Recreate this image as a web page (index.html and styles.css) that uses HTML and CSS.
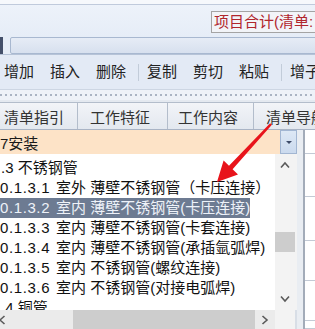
FILE: index.html
```html
<!DOCTYPE html>
<html lang="zh-CN">
<head>
<meta charset="utf-8">
<link rel="stylesheet" href="styles.css">
</head>
<body>
<div class="screen">
  <div class="top-strip"></div>
  <div class="top">
    <div class="total-box">项目合计(清单:</div>
  </div>
  <div class="inputbar">
    <div class="inputbar-mark"></div>
    <div class="inputbar-field"></div>
  </div>
  <div class="toolbar">
    <span class="tb-btn">增加</span>
    <span class="tb-btn">插入</span>
    <span class="tb-btn">删除</span>
    <span class="tb-sep"></span>
    <span class="tb-btn">复制</span>
    <span class="tb-btn">剪切</span>
    <span class="tb-btn">粘贴</span>
    <span class="tb-sep"></span>
    <span class="tb-btn">增子</span>
  </div>
  <div class="grip"><div class="grip-dots"></div></div>
  <div class="tabs">
    <div class="tab tab-1">清单指引</div>
    <div class="tab tab-2">工作特征</div>
    <div class="tab tab-3">工作内容</div>
    <div class="tab tab-4">清单导航</div>
  </div>
  <div class="main">
    <div class="left">
      <div class="combo">
        <div class="combo-text">7安装</div>
        <div class="combo-btn"><span class="combo-tri"></span></div>
      </div>
      <div class="listwrap">
        <div class="list">
          <div class="row"><span class="lead">.3</span> 不锈钢管</div>
          <div class="row"><span class="code">0.1.3.1</span>室外 薄壁不锈钢管（卡压连接）</div>
          <div class="row"><span class="sel"><span class="code">0.1.3.2</span>室内 薄壁不锈钢管(卡压连接)</span></div>
          <div class="row"><span class="code">0.1.3.3</span>室内 薄壁不锈钢管(卡套连接)</div>
          <div class="row"><span class="code">0.1.3.4</span>室内 薄壁不锈钢管(承插氩弧焊)</div>
          <div class="row"><span class="code">0.1.3.5</span>室内 不锈钢管(螺纹连接)</div>
          <div class="row"><span class="code">0.1.3.6</span>室内 不锈钢管(对接电弧焊)</div>
          <div class="row"><span class="lead">.4</span> 铜管</div>
        </div>
        <div class="vscroll">
          <div class="vs-arrow"><svg width="10" height="8" viewBox="0 0 10 8"><polyline points="1,6.5 5,2 9,6.5" fill="none" stroke="#5a5a5a" stroke-width="1.6"/></svg></div>
          <div class="vs-track"><div class="vs-thumb"></div></div>
          <div class="vs-arrow"><svg width="10" height="8" viewBox="0 0 10 8"><polyline points="1,1.5 5,6 9,1.5" fill="none" stroke="#5a5a5a" stroke-width="1.6"/></svg></div>
        </div>
      </div>
      <div class="hscrollrow">
        <div class="hscroll">
          <div class="hs-arrow hs-left"><svg width="8" height="10" viewBox="0 0 8 10"><polyline points="6.5,1 2,5 6.5,9" fill="none" stroke="#5a5a5a" stroke-width="1.6"/></svg></div>
          <div class="hs-track"><div class="hs-thumb"></div></div>
          <div class="hs-arrow"><svg width="8" height="10" viewBox="0 0 8 10"><polyline points="1.5,1 6,5 1.5,9" fill="none" stroke="#5a5a5a" stroke-width="1.6"/></svg></div>
        </div>
        <div class="corner"></div>
      </div>
    </div>
    <div class="gutter"></div>
    <div class="rpanel">
      <div class="rcell"></div>
      <div class="rcell"></div>
      <div class="rcell"></div>
      <div class="rcell"></div>
      <div class="rcell"></div>
      <div class="rcell"></div>
    </div>
  </div>
  <svg class="arrow" width="315" height="329" viewBox="0 0 315 329">
    <polygon points="270.1,123.2 271.9,124.8 232.6,169.2 238.0,174.4 217,182 223.6,160.6 229.0,165.8" fill="#e8141b"/>
  </svg>
</div>
</body>
</html>
```

FILE: styles.css
```css
html, body {
  margin: 0;
  padding: 0;
}
body {
  width: 315px;
  height: 329px;
  overflow: hidden;
  font-family: "Liberation Sans", "Noto Sans CJK SC", sans-serif;
  font-size: 15px;
  color: #1a1a1a;
  background: #e6edf7;
}
.screen {
  position: relative;
  width: 315px;
  height: 329px;
  overflow: hidden;
  display: flex;
  flex-direction: column;
}
.top-strip {
  height: 4px;
  background: #f6f8fc;
}
.top {
  height: 32px;
  box-sizing: border-box;
  border-top: 1px solid #c0cadc;
  background: linear-gradient(#edf2fa, #e6edf7);
  display: flex;
  justify-content: flex-end;
  padding-top: 6px;
}
.total-box {
  width: 104px;
  height: 22px;
  box-sizing: border-box;
  border: 1px solid #a4a4a4;
  border-right: none;
  background: #f2f4f8;
  color: #b0262d;
  line-height: 20px;
  padding-left: 2px;
  white-space: nowrap;
  overflow: hidden;
}
.inputbar {
  height: 19px;
  display: flex;
  padding-top: 1px;
  box-sizing: border-box;
  background: #e6edf7;
  border-bottom: 1px solid #b6c3d7;
}
.inputbar-mark {
  width: 3px;
  height: 17px;
  background: #44506a;
}
.inputbar-field {
  flex: 1;
  margin-left: 7px;
  margin-right: -6px;
  height: 17px;
  box-sizing: border-box;
  border: 1px solid #a8b8d0;
  border-radius: 2px;
  background: linear-gradient(#e6ecf6, #d7e0ee);
}
.toolbar {
  height: 34px;
  display: flex;
  align-items: center;
  padding-left: 4px;
  background: #e3eaf5;
  color: #222;
  white-space: nowrap;
  overflow: hidden;
}
.tb-btn {
  flex: none;
  margin-right: 16px;
  line-height: 20px;
}
.tb-sep {
  flex: none;
  width: 1px;
  height: 17px;
  background: #c2ccd9;
  margin: 0 8px 0 -4px;
}
.grip {
  height: 11px;
  box-sizing: border-box;
  border-top: 1px solid #cdd6e3;
  background: #eef2f8;
  display: flex;
  align-items: center;
}
.grip-dots {
  flex: 1;
  height: 2px;
  background: repeating-linear-gradient(90deg, #aab4c3 0 2px, transparent 2px 5px);
}
.tabs {
  height: 30px;
  box-sizing: border-box;
  padding-top: 2px;
  display: flex;
  background: #e4e9f0;
  border-bottom: 1px solid #a9b4c5;
  white-space: nowrap;
}
.tab {
  flex: none;
  height: 27px;
  box-sizing: border-box;
  border: 1px solid #b3bdcb;
  border-bottom: none;
  background: linear-gradient(#f2f4f8, #e3e8ef);
  color: #333;
  line-height: 24px;
  padding-top: 3px;
  margin-right: -1px;
}
.tab-1 { width: 88px; margin-left: -10px; padding-left: 13px; }
.tab-2 { width: 91px; padding-left: 12px; }
.tab-3 { width: 87px; padding-left: 10px; }
.tab-4 { width: 80px; padding-left: 12px; }
.main {
  flex: 1;
  display: flex;
  min-height: 0;
}
.left {
  width: 297px;
  display: flex;
  flex-direction: column;
}
.combo {
  height: 24px;
  display: flex;
  background: #fde3c7;
}
.combo-text {
  flex: 1;
  line-height: 27px;
  white-space: nowrap;
  overflow: hidden;
}
.combo-btn {
  width: 17px;
  box-sizing: border-box;
  border: 1px solid #a2b6d2;
  background: linear-gradient(#dde8f5, #cbdaee);
  display: flex;
  align-items: center;
  justify-content: center;
}
.combo-tri {
  width: 0;
  height: 0;
  border-left: 3.5px solid transparent;
  border-right: 3.5px solid transparent;
  border-top: 3.5px solid #3d4b68;
}
.listwrap {
  flex: 1;
  display: flex;
  min-height: 0;
  background: #fff;
}
.list {
  flex: 1;
  overflow: hidden;
  padding-top: 4px;
  background: #fff;
  color: #111;
}
.row {
  height: 20px;
  line-height: 20px;
  white-space: nowrap;
}
.lead {
  padding-left: 1px;
}
.code {
  display: inline-block;
  width: 56px;
  letter-spacing: 0.6px;
}
.sel {
  display: inline-block;
  background: #6d7b92;
  color: #eef2f9;
}
.vscroll {
  width: 22px;
  box-sizing: border-box;
  padding-right: 2px;
  display: flex;
  flex-direction: column;
  background: #f3f3f3;
}
.vs-arrow {
  height: 22px;
  display: flex;
  align-items: center;
  justify-content: center;
}
.vs-track {
  flex: 1;
  padding-top: 56px;
}
.vs-thumb {
  height: 20px;
  background: #cdcdcd;
}
.hscrollrow {
  height: 19px;
  display: flex;
}
.hscroll {
  width: 275px;
  display: flex;
  background: #ebebeb;
}
.hs-arrow {
  width: 20px;
  display: flex;
  align-items: center;
  justify-content: center;
}
.hs-left {
  margin-left: -8px;
}
.hs-track {
  flex: 1;
  display: flex;
  padding-left: 61px;
}
.hs-thumb {
  flex: 1;
  background: #cdcdcd;
}
.corner {
  flex: 1;
  background: #f3f3f3;
  border-right: 2px solid #d8dee6;
}
.gutter {
  width: 6px;
  background: #e9edf2;
}
.rpanel {
  flex: 1;
  display: grid;
  grid-template-rows: 24px 43px 44px 40px 40px 1fr;
  border-left: 2px solid #a3acb9;
  background: #fff;
}
.rcell {
  border-bottom: 1px solid #c3cad5;
}
.arrow {
  position: absolute;
  left: 0;
  top: 0;
  pointer-events: none;
}
```
